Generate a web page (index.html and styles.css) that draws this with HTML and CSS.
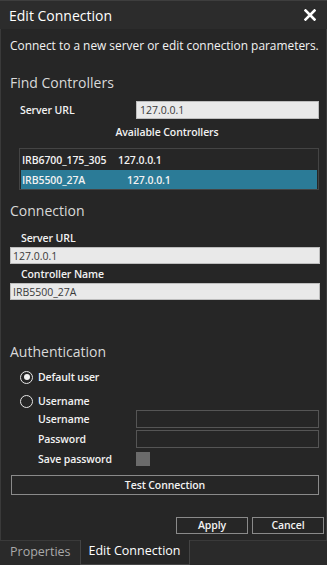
FILE: index.html
```html
<!DOCTYPE html>
<html lang="en-US">
  <head>
    <title>Edit Connection</title>
    <meta charset="UTF-8">
    <link rel="stylesheet" href="styles.css">
  </head>
  <body>
    <div class="window">
      <div class="titlebar">
        <span class="title">Edit Connection</span>
        <svg class="close" width="12" height="12" viewBox="0 0 12 12" aria-label="Close">
          <path d="M1.5 1.5 L10.5 10.5 M10.5 1.5 L1.5 10.5" stroke="#fff" stroke-width="2.6" stroke-linecap="square"/>
        </svg>
      </div>

      <div class="panel">
        <p class="intro">Connect to a new server or edit connection parameters.</p>

        <h2 class="section find">Find Controllers</h2>
        <div class="url-row">
          <label class="label" for="find-url">Server URL</label>
          <input class="text" id="find-url" type="text" value="127.0.0.1">
        </div>
        <div class="caption">Available Controllers</div>
        <ul class="list" role="listbox">
          <li class="item"><span class="name">IRB6700_175_305</span><span>127.0.0.1</span></li>
          <li class="item selected"><span class="name wide">IRB5500_27A</span><span>127.0.0.1</span></li>
        </ul>

        <h2 class="section conn">Connection</h2>
        <label class="label stacked" for="conn-url">Server URL</label>
        <input class="text full" id="conn-url" type="text" value="127.0.0.1">
        <label class="label stacked" for="conn-name">Controller Name</label>
        <input class="text full" id="conn-name" type="text" value="IRB5500_27A">

        <h2 class="section auth">Authentication</h2>
        <div class="radio checked"><span class="dot"></span>Default user</div>
        <div class="radio"><span class="dot"></span>Username</div>
        <div class="creds">
          <span class="label">Username</span><span class="box"></span>
          <span class="label">Password</span><span class="box"></span>
          <span class="label">Save password</span><span class="check"></span>
        </div>

        <button class="btn test" type="button">Test Connection</button>

        <div class="actions">
          <button class="btn small" type="button">Apply</button>
          <button class="btn small" type="button">Cancel</button>
        </div>
      </div>

      <div class="tabs">
        <span class="tab">Properties</span>
        <span class="tab active">Edit Connection</span>
      </div>
    </div>
  </body>
</html>
```

FILE: styles.css
```css
* {
  box-sizing: border-box;
}

body {
  margin: 0;
  background: #2a2a2a;
  font-family: "Open Sans", "Noto Sans", sans-serif;
  color: #f2f2f2;
}

.window {
  width: 327px;
  height: 565px;
  display: flex;
  flex-direction: column;
  background: #2a2a2a;
}

/* title bar */
.titlebar {
  height: 29px;
  flex: none;
  display: flex;
  align-items: center;
  justify-content: space-between;
  padding: 0 11px 0 9px;
  background: #2c2c2c;
  border-top: 1px solid #3e3e3e;
}
.title {
  font-size: 14px;
  color: #fff;
}

/* main panel */
.panel {
  flex: 1;
  display: flex;
  flex-direction: column;
  background: #262626;
  border: 1px solid #3a3a3a;
  border-top: 0;
  padding: 8px 6px 0 9px;
}

.intro {
  margin: 0;
  font-size: 11.9px;
  line-height: 16px;
  white-space: nowrap;
}

.section {
  margin: 0;
  font-size: 14px;
  font-weight: 400;
  line-height: 20px;
  color: #d9d9d9;
}
.find { margin-top: 20px; }
.conn { margin-top: 11px; }
.auth { margin-top: 42px; }

.label {
  font-size: 10.5px;
  font-weight: 600;
  line-height: 16px;
  letter-spacing: -0.1px;
  color: #f2f2f2;
}

.text {
  height: 18px;
  border: 1px solid #bdbdbd;
  background: #e9e9e9;
  color: #3a3a3a;
  font: 400 10.5px "Open Sans", sans-serif;
  padding: 0 3px;
  outline: none;
}

.url-row {
  display: flex;
  align-items: center;
  justify-content: space-between;
  margin: 8px 1px 0 10px;
}
.url-row .text {
  width: 183px;
}

.caption {
  margin-top: 5px;
  text-align: center;
  font-size: 10.5px;
  font-weight: 600;
  letter-spacing: -0.1px;
  line-height: 16px;
  padding-left: 4px;
}

/* controller list */
.list {
  list-style: none;
  margin: 8px 1px 0 9px;
  padding: 1px 1px 0;
  border: 1px solid #444;
  background: #262626;
}
.item {
  display: flex;
  height: 20px;
  align-items: center;
  padding-left: 1px;
  font-size: 10.5px;
  font-weight: 600;
  letter-spacing: -0.1px;
  color: #f2f2f2;
}
.item .name {
  width: 96px;
}
.item .name.wide {
  width: 105px;
}
.item.selected {
  background: #2b7b97;
  height: 19px;
}

.stacked {
  display: block;
  padding-left: 11px;
}
.conn + .stacked {
  margin-top: 9px;
}
.text.full {
  width: 310px;
  height: 17px;
  margin-top: 1px;
  padding-left: 2px;
}
.text.full + .stacked {
  margin-top: 2px;
}

/* radios */
.radio {
  display: flex;
  align-items: center;
  height: 24px;
  font-size: 10.5px;
  font-weight: 600;
  letter-spacing: -0.1px;
  margin-left: 10px;
}
.auth + .radio {
  margin-top: 3px;
}
.dot {
  width: 13px;
  height: 13px;
  border: 1.5px solid #e6e6e6;
  border-radius: 50%;
  margin-right: 5px;
  display: flex;
  align-items: center;
  justify-content: center;
}
.radio.checked .dot::after {
  content: '';
  width: 6px;
  height: 6px;
  border-radius: 50%;
  background: #f2f2f2;
}

.creds {
  display: grid;
  grid-template-columns: 98px 183px;
  grid-auto-rows: 18px;
  row-gap: 2px;
  align-items: center;
  margin: -3px 0 0 28px;
}
.box {
  height: 18px;
  border: 1px solid #555;
  background: #262626;
}
.check {
  width: 14px;
  height: 14px;
  background: #6b6b6b;
}

/* buttons */
.btn {
  font: 600 10.5px "Open Sans", sans-serif;
  letter-spacing: -0.1px;
  color: #f2f2f2;
  background: #262626;
  border: 1px solid #8a8a8a;
  padding: 0;
  line-height: 1;
}
.test {
  margin: 7px 1px 0 1px;
  height: 20px;
}
.actions {
  display: flex;
  justify-content: flex-end;
  gap: 4px;
  margin: 22px -4px 0 0;
}
.small {
  width: 72px;
  height: 17px;
}

/* tab strip */
.tabs {
  height: 24px;
  flex: none;
  display: flex;
  background: #2a2a2a;
}
.tab {
  font-size: 12.5px;
  line-height: 22px;
  padding: 0 9px 0 10px;
  color: #a9a9a9;
}
.tab.active {
  margin-top: -1px;
  background: #262626;
  border: 1px solid #444;
  border-top: 0;
  color: #fff;
  padding: 0 8px;
}
```
